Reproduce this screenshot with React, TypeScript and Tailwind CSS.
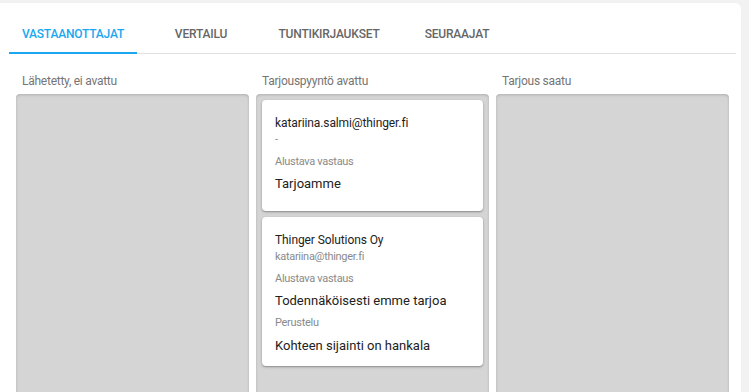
import type { ReactNode } from 'react'

const TABS = ['Vastaanottajat', 'Vertailu', 'Tuntikirjaukset', 'Seuraajat']

type Reply = {
  title: string
  subtitle: string
  answer: string
  reason?: string
}

const COLUMNS: { label: string; items: Reply[] }[] = [
  { label: 'Lähetetty, ei avattu', items: [] },
  {
    label: 'Tarjouspyyntö avattu',
    items: [
      { title: 'katariina.salmi@thinger.fi', subtitle: '-', answer: 'Tarjoamme' },
      {
        title: 'Thinger Solutions Oy',
        subtitle: 'katariina@thinger.fi',
        answer: 'Todennäköisesti emme tarjoa',
        reason: 'Kohteen sijainti on hankala',
      },
    ],
  },
  { label: 'Tarjous saatu', items: [] },
]

function Caption({ children }: { children: ReactNode }) {
  return <div className="text-[11px] leading-[14px] tracking-[-0.3px] text-[#8a8a8a]">{children}</div>
}

function ReplyCard({ reply }: { reply: Reply }) {
  return (
    <div
      className={`rounded-[4px] bg-white px-[13px] pt-[15px] shadow-[0_1px_3px_rgba(0,0,0,0.25),0_1px_1px_rgba(0,0,0,0.14)] ${
        reply.reason ? 'pb-[11px]' : 'pb-[18px]'
      }`}
    >
      <div className="text-[12px] leading-[16px] tracking-[-0.1px] text-[#222]">{reply.title}</div>
      <div className="mt-[2px]">
        <Caption>{reply.subtitle}</Caption>
      </div>
      <div className="mt-[8px]">
        <Caption>Alustava vastaus</Caption>
      </div>
      <div className="mt-[6px] text-[13px] leading-[18px] text-[#222]">{reply.answer}</div>
      {reply.reason && (
        <>
          <div className="mt-[6px]">
            <Caption>Perustelu</Caption>
          </div>
          <div className="mt-[7px] text-[13px] leading-[18px] text-[#222]">{reply.reason}</div>
        </>
      )}
    </div>
  )
}

export default function App() {
  return (
    <div className="h-screen overflow-hidden bg-[#f2f2f2] pt-[3px] pr-[8px] font-['Roboto',sans-serif]">
      <div className="h-full rounded-tr-[6px] bg-white">
        <div className="ml-[9px] mr-[5px] flex border-b border-[#e0e0e0] pt-[11px]">
          {TABS.map((tab, i) => (
            <div
              key={tab}
              className={`relative flex h-[39px] w-[128px] items-center justify-center text-[12px] font-medium uppercase tracking-[-0.2px] ${
                i === 0 ? 'text-[#1aa7f0]' : 'text-[#666]'
              }`}
            >
              {tab}
              {i === 0 && <span className="absolute -bottom-[1px] left-0 h-[2px] w-full bg-[#1aa7f0]" />}
            </div>
          ))}
        </div>

        <div className="flex gap-[7px] px-[16px] pt-[19px]">
          {COLUMNS.map((col) => (
            <div key={col.label} className="flex w-[233px] shrink-0 flex-col">
              <div className="px-[6px] text-[12px] leading-[16px] tracking-[-0.25px] text-[#757575]">{col.label}</div>
              <div className="mt-[5px] flex h-[320px] flex-col gap-[6px] rounded-[4px] bg-[#d5d5d5] p-[6px] shadow-[inset_0_1px_3px_rgba(0,0,0,0.18)]">
                {col.items.map((r) => (
                  <ReplyCard key={r.title} reply={r} />
                ))}
              </div>
            </div>
          ))}
        </div>
      </div>
    </div>
  )
}
